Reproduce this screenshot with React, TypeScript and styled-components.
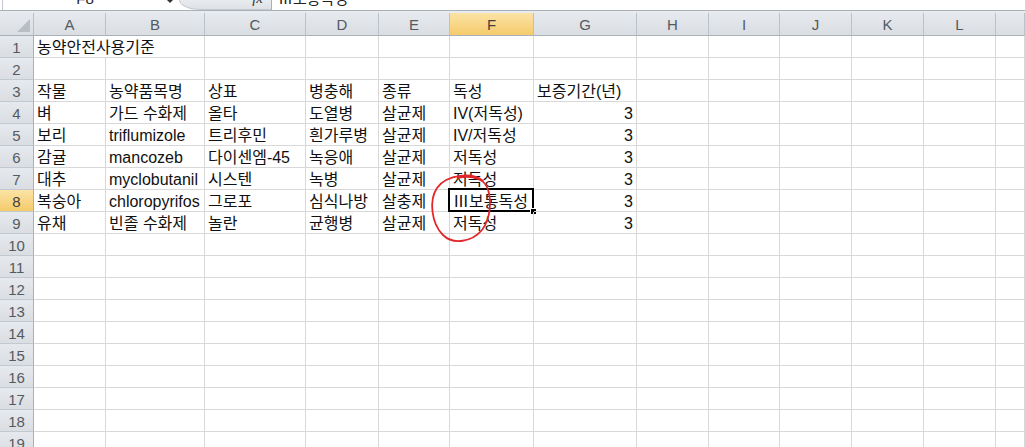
import React from "react";
import styled, { createGlobalStyle, css } from "styled-components";

// 열 너비 (행 머리글 포함), 마지막 열은 남는 공간
const COL_WIDTHS = [34, 72, 99, 101, 73, 71, 84, 103, 72, 71, 72, 72, 72];
const GRID_COLS = COL_WIDTHS.map((w) => `${w}px`).join(" ") + " 1fr";
const LETTERS = ["A", "B", "C", "D", "E", "F", "G", "H", "I", "J", "K", "L", ""];

type cellType = { text?: string; num?: boolean; span?: number };

const rows: cellType[][] = [
  [{ text: "농약안전사용기준", span: 2 }],
  [],
  [
    { text: "작물" },
    { text: "농약품목명" },
    { text: "상표" },
    { text: "병충해" },
    { text: "종류" },
    { text: "독성" },
    { text: "보증기간(년)" },
  ],
  [
    { text: "벼" },
    { text: "가드 수화제" },
    { text: "올타" },
    { text: "도열병" },
    { text: "살균제" },
    { text: "IV(저독성)" },
    { text: "3", num: true },
  ],
  [
    { text: "보리" },
    { text: "triflumizole" },
    { text: "트리후민" },
    { text: "흰가루병" },
    { text: "살균제" },
    { text: "IV/저독성" },
    { text: "3", num: true },
  ],
  [
    { text: "감귤" },
    { text: "mancozeb" },
    { text: "다이센엠-45" },
    { text: "녹응애" },
    { text: "살균제" },
    { text: "저독성" },
    { text: "3", num: true },
  ],
  [
    { text: "대추" },
    { text: "myclobutanil" },
    { text: "시스텐" },
    { text: "녹병" },
    { text: "살균제" },
    { text: "저독성" },
    { text: "3", num: true },
  ],
  [
    { text: "복숭아" },
    { text: "chloropyrifos" },
    { text: "그로포" },
    { text: "심식나방" },
    { text: "살충제" },
    { text: "Ⅲ보통독성" },
    { text: "3", num: true },
  ],
  [
    { text: "유채" },
    { text: "빈졸 수화제" },
    { text: "놀란" },
    { text: "균행병" },
    { text: "살균제" },
    { text: "저독성" },
    { text: "3", num: true },
  ],
];

const ACTIVE_ROW = 8;
const ACTIVE_COL = 5; // F

/** 한 행의 셀 배열을 13칸(A~M)으로 채워서 반환 */
const fillRow = (cells: cellType[]) => {
  const out: cellType[] = [];
  let used = 0;
  cells.forEach((c) => {
    out.push(c);
    used += c.span ?? 1;
  });
  while (used < 13) {
    out.push({});
    used++;
  }
  return out;
};

export default function App() {
  const allRows = Array.from({ length: 19 }, (_, i) => rows[i] ?? []);
  return (
    <>
      <GlobalStyle />
      <SPage>
        <SFormulaBar>
          <SNameBox>
            <SCropText>F8</SCropText>
          </SNameBox>
          <SArrow />
          <SFxButton>
            <SFx>fx</SFx>
          </SFxButton>
          <SFormulaInput>
            <SCropText>Ⅲ보통독성</SCropText>
          </SFormulaInput>
        </SFormulaBar>
        <SSheet>
          <SRow>
            <SCorner>
              <STriangle />
            </SCorner>
            {LETTERS.map((l, i) => (
              <SColHeader key={i} $active={i === ACTIVE_COL}>
                {l}
              </SColHeader>
            ))}
          </SRow>
          {allRows.map((r, ri) => {
            const rowNo = ri + 1;
            let col = 0;
            return (
              <SRow key={rowNo}>
                <SRowHeader $active={rowNo === ACTIVE_ROW}>{rowNo}</SRowHeader>
                {fillRow(r).map((c, ci) => {
                  const isActive = rowNo === ACTIVE_ROW && col === ACTIVE_COL;
                  col += c.span ?? 1;
                  return (
                    <SCell key={ci} $num={c.num} $span={c.span ?? 1}>
                      {c.text && <SText>{c.text}</SText>}
                      {isActive && (
                        <SSelection>
                          <SFillHandle />
                        </SSelection>
                      )}
                    </SCell>
                  );
                })}
              </SRow>
            );
          })}
          {/* 손으로 그린 빨간 동그라미 */}
          <SScribble viewBox="0 0 75 80" width="75" height="80">
            <path
              d="M 58 13 C 48 4, 22 6, 12 20 C 4 32, 6 55, 18 67 C 28 77, 47 74, 57 62 C 66 50, 67 31, 62 19 C 58 10, 44 7, 33 10"
              fill="none"
              stroke="#e3262a"
              strokeWidth="1.8"
              strokeLinecap="round"
            />
          </SScribble>
        </SSheet>
      </SPage>
    </>
  );
}

const GlobalStyle = createGlobalStyle`
  html, body {
    margin: 0;
    padding: 0;
    background: #ffffff;
    overflow: hidden;
  }
  body {
    font-family: "Liberation Sans", "Noto Sans CJK KR", sans-serif;
  }
`;

const SPage = styled.div`
  width: 1025px;
  height: 447px;
  overflow: hidden;
  background: #ffffff;
`;

const SFormulaBar = styled.div`
  display: flex;
  align-items: stretch;
  height: 10px;
  border-bottom: 1px solid #a9b0b8;
  box-shadow: 0 2px 0 #e9ecef;
  margin-bottom: 2px;
  background: #ffffff;
  overflow: hidden;
`;

const SCropText = styled.div`
  font-size: 15px;
  line-height: 15px;
  margin-top: -9px;
  color: #222;
  white-space: nowrap;
`;

const SNameBox = styled.div`
  width: 164px;
  display: flex;
  justify-content: center;
  border-left: 1px solid #c5cad0;
  margin-left: 2px;
`;

const SArrow = styled.div`
  width: 12px;
  display: flex;
  align-items: flex-start;
  &::after {
    content: "";
    border-left: 3px solid transparent;
    border-right: 3px solid transparent;
    border-top: 3px solid #333;
  }
`;

const SFxButton = styled.div`
  width: 92px;
  display: flex;
  justify-content: flex-end;
  padding-right: 8px;
  box-sizing: border-box;
  background: linear-gradient(#e9ecef, #dde1e5);
  border-radius: 0 0 0 30px / 0 0 0 14px;
  border-left: 1px solid #c3c8ce;
  border-bottom: 1px solid #c3c8ce;
`;

const SFx = styled.div`
  font-family: "Liberation Serif", serif;
  font-style: italic;
  font-size: 15px;
  line-height: 15px;
  margin-top: -9px;
  color: #333;
`;

const SFormulaInput = styled.div`
  flex: 1;
  border-left: 1px solid #a9b0b8;
  padding-left: 6px;
`;

const SSheet = styled.div`
  position: relative;
`;

const SRow = styled.div`
  display: grid;
  grid-template-columns: ${GRID_COLS};
  height: 22px;
  &:first-child {
    height: 23px;
  }
`;

const headerBase = css`
  box-sizing: border-box;
  display: flex;
  align-items: center;
  justify-content: center;
  font-family: "Liberation Sans", "Noto Sans CJK KR", sans-serif;
  font-size: 15px;
  color: #555a60;
  background: linear-gradient(#e6e9ed, #dadee3);
`;

const activeHeader = css`
  background: linear-gradient(#fbe3a6, #f5cb6b);
  color: #3f3f3f;
`;

const SCorner = styled.div`
  ${headerBase};
  align-items: flex-end;
  justify-content: flex-end;
  padding: 0 3px 3px 0;
  border-right: 1px solid #b9bfc6;
  border-bottom: 1px solid #a8b0b9;
`;

const STriangle = styled.div`
  width: 0;
  height: 0;
  border-left: 13px solid transparent;
  border-bottom: 13px solid #b9bec4;
`;

const SColHeader = styled.div<{ $active?: boolean }>`
  ${headerBase};
  border-right: 1px solid #bcc2c9;
  border-bottom: 1px solid #a8b0b9;
  ${({ $active }) => $active && activeHeader};
`;

const SRowHeader = styled.div<{ $active?: boolean }>`
  ${headerBase};
  padding-top: 1px;
  border-right: 1px solid #a8b0b9;
  border-bottom: 1px solid #c3c9d0;
  ${({ $active }) => $active && activeHeader};
`;

// 셀 자체는 한글 글꼴로 줄 기준선을 잡아서, 영문만 있는 셀도 같은 높이에 놓이게 한다
const SCell = styled.div<{ $num?: boolean; $span: number }>`
  position: relative;
  box-sizing: border-box;
  grid-column: span ${({ $span }) => $span};
  height: 22px;
  padding: 0 3px;
  font-family: "Noto Sans CJK KR", sans-serif;
  font-size: 16px;
  line-height: 20px;
  text-align: ${({ $num }) => ($num ? "right" : "left")};
  color: #111;
  white-space: nowrap;
  border-right: 1px solid #d8d8d8;
  border-bottom: 1px solid #d8d8d8;
`;

const SText = styled.span`
  font-family: "Liberation Sans", "Noto Sans CJK KR", sans-serif;
`;

const SSelection = styled.div`
  position: absolute;
  top: -2px;
  left: -2px;
  right: -1px;
  bottom: -1px;
  border: 2px solid #000;
  pointer-events: none;
`;

const SFillHandle = styled.div`
  position: absolute;
  right: -5px;
  bottom: -5px;
  width: 5px;
  height: 5px;
  background: #000;
  border: 1px solid #fff;
`;

const SScribble = styled.svg`
  position: absolute;
  left: 425px;
  top: 155px;
  pointer-events: none;
`;
